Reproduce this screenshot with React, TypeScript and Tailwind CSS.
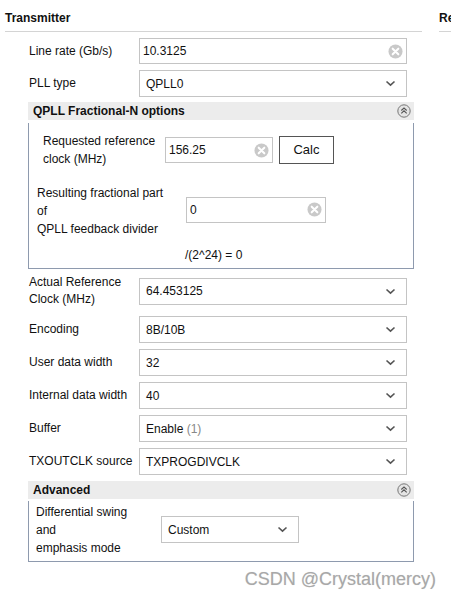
import React from 'react'

const font = { fontFamily: '"Liberation Sans", Arial, sans-serif' }

function ClearIcon() {
  return (
    <svg width="15" height="15" viewBox="0 0 16 16" className="shrink-0">
      <circle cx="8" cy="8" r="7.5" fill="#c9c9c9" />
      <path d="M5 5 L11 11 M11 5 L5 11" stroke="#fff" strokeWidth="2.2" strokeLinecap="round" />
    </svg>
  )
}

function Chevron() {
  return (
    <svg width="11" height="7" viewBox="0 0 11 7" className="shrink-0">
      <path d="M1.5 1.5 L5.5 5.2 L9.5 1.5" stroke="#555" strokeWidth="1.6" fill="none" />
    </svg>
  )
}

function CollapseIcon() {
  return (
    <svg width="14" height="14" viewBox="0 0 14 14">
      <circle cx="7" cy="7" r="6.2" fill="#e4e4e4" stroke="#777" strokeWidth="1" />
      <path d="M4.3 6.5 L7 4 L9.7 6.5 M4.3 9.3 L7 6.8 L9.7 9.3" stroke="#555" strokeWidth="1.1" fill="none" />
    </svg>
  )
}

function TextBox({ value, className }: { value: string; className: string }) {
  return (
    <div className={`flex items-center justify-between border border-[#c4c4c4] bg-white pl-[3px] pr-[3px] ${className}`}>
      <span>{value}</span>
      <ClearIcon />
    </div>
  )
}

function Select({ children, className }: { children: React.ReactNode; className: string }) {
  return (
    <div className={`flex items-center justify-between border border-[#c4c4c4] bg-white pl-[6px] pr-[10px] ${className}`}>
      <span>{children}</span>
      <Chevron />
    </div>
  )
}

function Row({ label, children, className = '' }: { label: React.ReactNode; children: React.ReactNode; className?: string }) {
  return (
    <div className={`flex items-center ${className}`}>
      <div className="w-[110px] shrink-0 leading-[17px]">{label}</div>
      {children}
    </div>
  )
}

function SectionHeader({ title }: { title: string }) {
  return (
    <div className="flex items-center justify-between bg-[#ececec] pl-[5px] pr-[3px] font-bold">
      <span>{title}</span>
      <CollapseIcon />
    </div>
  )
}

export default function App() {
  return (
    <div className="w-[451px] h-[599px] overflow-hidden bg-white text-[12px] text-[#111]" style={font}>
      <div className="flex">
        <div className="ml-[5px] w-[417px] shrink-0">
          <div className="h-[32px] flex items-end pb-[4px] border-b border-[#d4d4d4] font-bold">Transmitter</div>

          <div className="ml-[24px] pt-[6px] flex flex-col">
            <Row label="Line rate (Gb/s)">
              <TextBox value="10.3125" className="w-[268px] h-[26px]" />
            </Row>
            <Row label="PLL type" className="mt-[6px]">
              <Select className="w-[268px] h-[27px]">QPLL0</Select>
            </Row>

            <div className="ml-[-1px] w-[386px] mt-[5px]">
              <div className="h-[21px] flex">
                <div className="flex-1">
                  <SectionHeader title="QPLL Fractional-N options" />
                </div>
              </div>
              <div className="h-[146px] border border-t-0 border-[#8e9aae] flex flex-col">
                <div className="flex items-center pt-[9px] pl-[14px]">
                  <div className="w-[122px] leading-[18px]">
                    Requested reference
                    <br />
                    clock (MHz)
                  </div>
                  <TextBox value="156.25" className="w-[108px] h-[26px]" />
                  <div className="ml-[6px] w-[55px] h-[28px] border border-[#555] flex items-center justify-center text-[13px]">
                    Calc
                  </div>
                </div>
                <div className="flex items-center pt-[16px] pl-[8px]">
                  <div className="w-[149px] leading-[18px]">
                    Resulting fractional part
                    <br />
                    of
                    <br />
                    QPLL feedback divider
                  </div>
                  <TextBox value="0" className="w-[140px] h-[26px] mb-[3px]" />
                </div>
                <div className="pl-[156px] pt-[8px]">/(2^24) = 0</div>
              </div>
            </div>

            <Row
              className="mt-[5px]"
              label={
                <>
                  Actual Reference
                  <br />
                  Clock (MHz)
                </>
              }
            >
              <Select className="w-[268px] h-[27px]">64.453125</Select>
            </Row>
            <Row label="Encoding" className="mt-[8px]">
              <Select className="w-[268px] h-[27px]">8B/10B</Select>
            </Row>
            <Row label="User data width" className="mt-[6px]">
              <Select className="w-[268px] h-[27px]">32</Select>
            </Row>
            <Row label="Internal data width" className="mt-[6px]">
              <Select className="w-[268px] h-[27px]">40</Select>
            </Row>
            <Row label="Buffer" className="mt-[6px]">
              <Select className="w-[268px] h-[27px]">
                Enable <span className="text-[#888]">(1)</span>
              </Select>
            </Row>
            <Row label="TXOUTCLK source" className="mt-[6px]">
              <Select className="w-[268px] h-[27px]">TXPROGDIVCLK</Select>
            </Row>

            <div className="ml-[-1px] w-[386px] mt-[6px]">
              <div className="h-[20px] flex">
                <div className="flex-1">
                  <SectionHeader title="Advanced" />
                </div>
              </div>
              <div className="h-[61px] border border-t-0 border-[#8e9aae] flex items-center pl-[7px]">
                <div className="w-[125px] leading-[18px] mb-[3px]">
                  Differential swing
                  <br />
                  and
                  <br />
                  emphasis mode
                </div>
                <Select className="w-[138px] h-[27px] mb-[3px]">Custom</Select>
              </div>
            </div>
          </div>
          <div className="text-right mt-[4px] text-[18px] text-[#a8a8a8] w-[431px] [text-shadow:0_0_1px_#ddd]">
            CSDN @Crystal(mercy)
          </div>
        </div>
        <div className="ml-[17px] shrink-0 w-[60px]">
          <div className="h-[32px] flex items-end pb-[4px] border-b border-[#d4d4d4] font-bold">Receiver</div>
        </div>
      </div>
    </div>
  )
}
